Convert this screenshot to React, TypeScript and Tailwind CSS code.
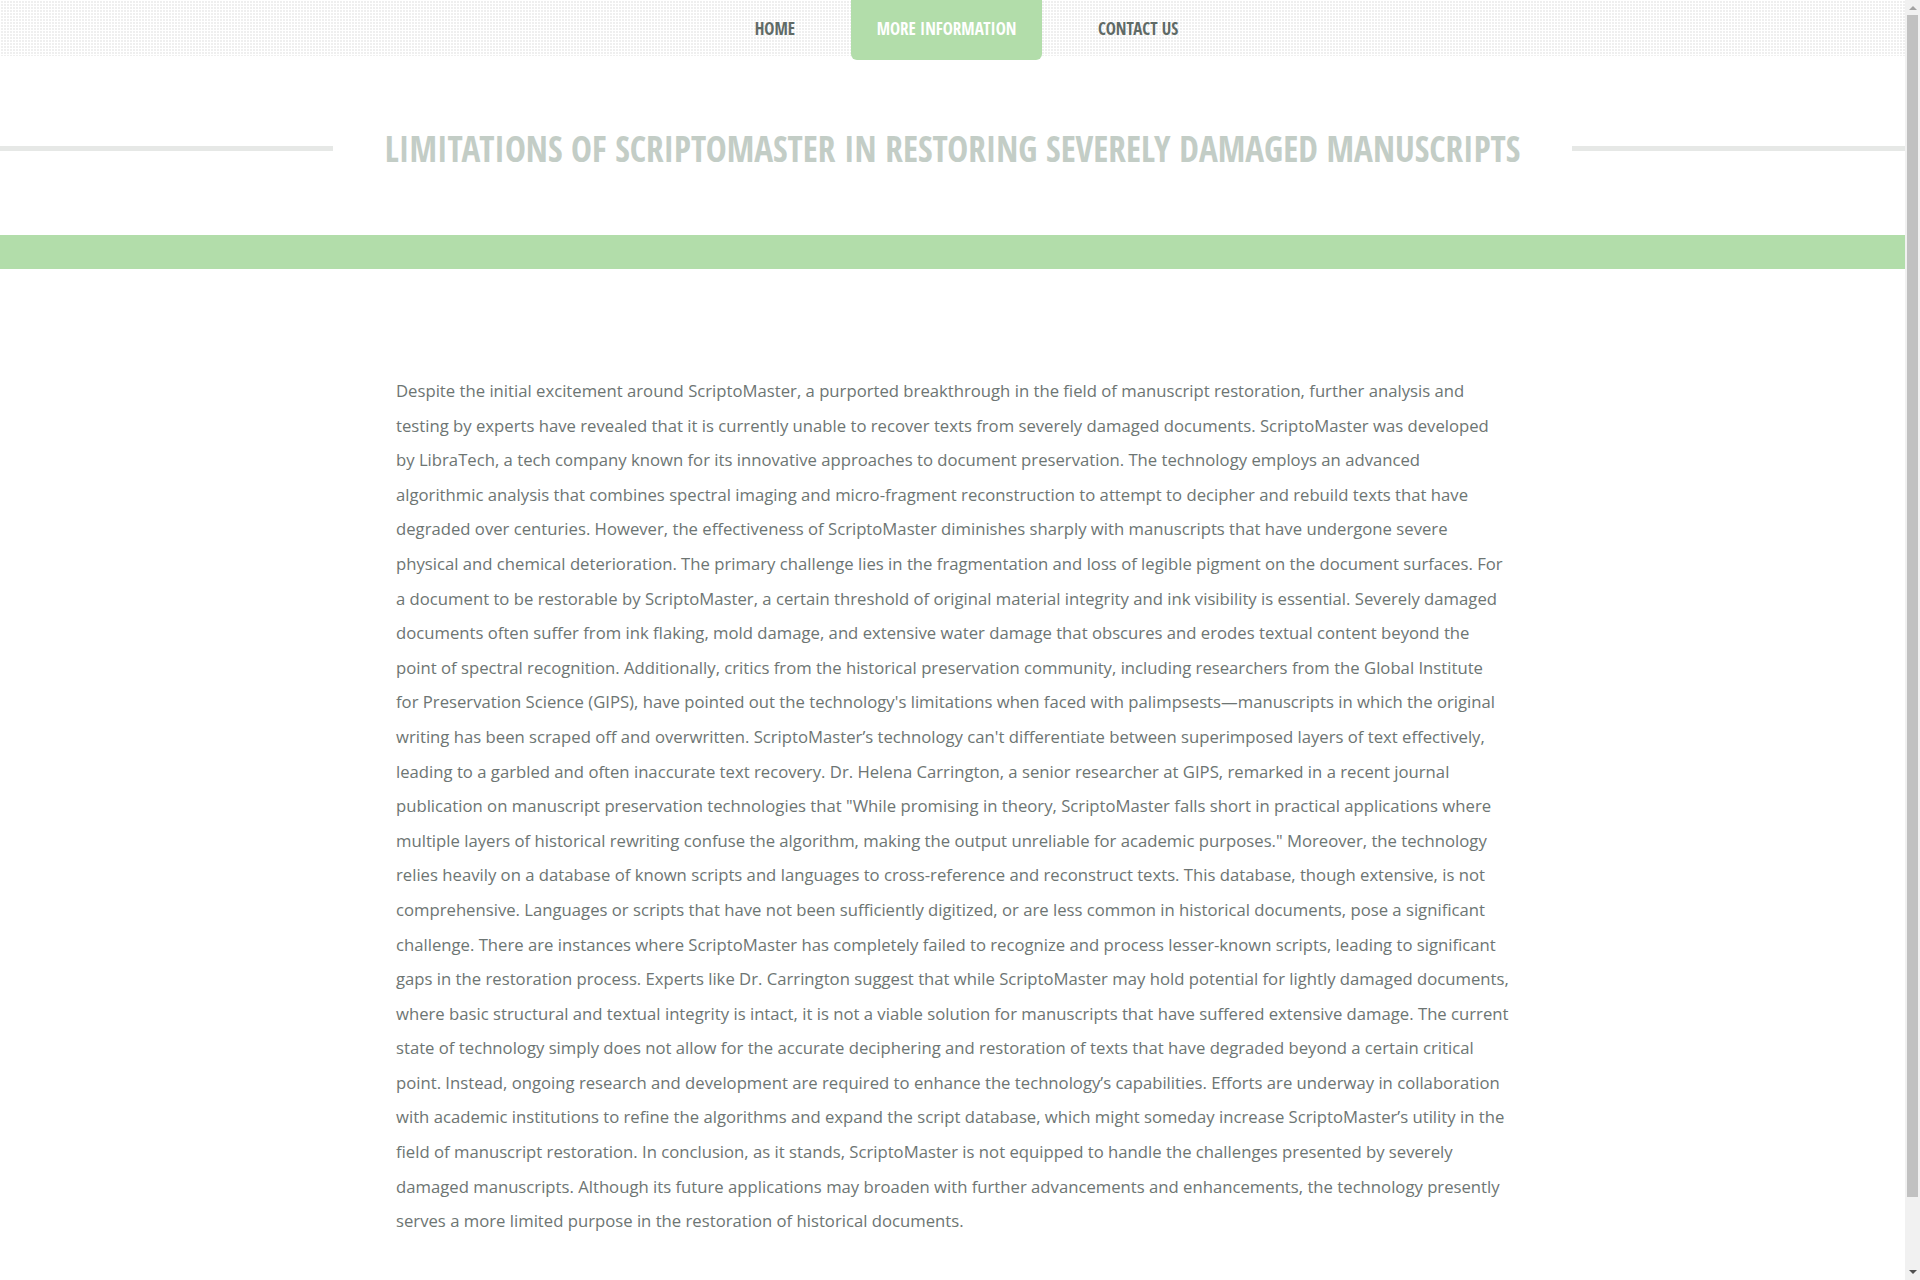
import React from "react"

const body = `Despite the initial excitement around ScriptoMaster, a purported breakthrough in the field of manuscript restoration, further analysis and testing by experts have revealed that it is currently unable to recover texts from severely damaged documents. ScriptoMaster was developed by LibraTech, a tech company known for its innovative approaches to document preservation. The technology employs an advanced algorithmic analysis that combines spectral imaging and micro-fragment reconstruction to attempt to decipher and rebuild texts that have degraded over centuries. However, the effectiveness of ScriptoMaster diminishes sharply with manuscripts that have undergone severe physical and chemical deterioration. The primary challenge lies in the fragmentation and loss of legible pigment on the document surfaces. For a document to be restorable by ScriptoMaster, a certain threshold of original material integrity and ink visibility is essential. Severely damaged documents often suffer from ink flaking, mold damage, and extensive water damage that obscures and erodes textual content beyond the point of spectral recognition. Additionally, critics from the historical preservation community, including researchers from the Global Institute for Preservation Science (GIPS), have pointed out the technology's limitations when faced with palimpsests\u2014manuscripts in which the original writing has been scraped off and overwritten. ScriptoMaster\u2019s technology can't differentiate between superimposed layers of text effectively, leading to a garbled and often inaccurate text recovery. Dr. Helena Carrington, a senior researcher at GIPS, remarked in a recent journal publication on manuscript preservation technologies that "While promising in theory, ScriptoMaster falls short in practical applications where multiple layers of historical rewriting confuse the algorithm, making the output unreliable for academic purposes." Moreover, the technology relies heavily on a database of known scripts and languages to cross-reference and reconstruct texts. This database, though extensive, is not comprehensive. Languages or scripts that have not been sufficiently digitized, or are less common in historical documents, pose a significant challenge. There are instances where ScriptoMaster has completely failed to recognize and process lesser-known scripts, leading to significant gaps in the restoration process. Experts like Dr. Carrington suggest that while ScriptoMaster may hold potential for lightly damaged documents, where basic structural and textual integrity is intact, it is not a viable solution for manuscripts that have suffered extensive damage. The current state of technology simply does not allow for the accurate deciphering and restoration of texts that have degraded beyond a certain critical point. Instead, ongoing research and development are required to enhance the technology\u2019s capabilities. Efforts are underway in collaboration with academic institutions to refine the algorithms and expand the script database, which might someday increase ScriptoMaster\u2019s utility in the field of manuscript restoration. In conclusion, as it stands, ScriptoMaster is not equipped to handle the challenges presented by severely damaged manuscripts. Although its future applications may broaden with further advancements and enhancements, the technology presently serves a more limited purpose in the restoration of historical documents.`

const condensed = "font-['Open_Sans_Condensed','Open_Sans',sans-serif] font-bold [font-stretch:75%]"

function Nav() {
  return (
    <header className="h-[56px] bg-[#efefef] bg-[linear-gradient(to_right,#fff_1px,transparent_1px),linear-gradient(to_bottom,#fff_1px,transparent_1px)] bg-[length:3px_3px]">
      <nav className={`flex justify-center pl-[28px] text-[17px] uppercase whitespace-nowrap ${condensed}`}>
        <a className="px-[26px] h-[57px] flex items-center text-[#5f6a66]">Home</a>
        <a className="ml-[30px] w-[191px] h-[60px] pb-[3px] flex items-center justify-center rounded-b-[6px] bg-[#b2ddaa] text-white">
          More Information
        </a>
        <a className="ml-[30px] px-[26px] h-[57px] flex items-center text-[#5f6a66]">Contact Us</a>
      </nav>
    </header>
  )
}

// window scrollbar as seen in the screenshot
function Scrollbar() {
  return (
    <aside className="sticky top-0 w-[15px] h-[1280px] shrink-0 bg-[#f1f1f1] flex flex-col items-center">
      <div className="h-[15px] flex items-center justify-center">
        <div className="w-0 h-0 border-x-[4px] border-x-transparent border-b-[4px] border-b-[#a3a3a3]" />
      </div>
      <div className="w-[11px] flex-1 bg-[#c1c1c1]" />
      <div className="h-[83px] flex items-end justify-center pb-[6px]">
        <div className="w-0 h-0 border-x-[4px] border-x-transparent border-t-[4px] border-t-[#505050]" />
      </div>
    </aside>
  )
}

export default function App() {
  return (
    <div className="flex bg-white font-['Open_Sans',sans-serif]">
      <main className="flex-1 min-w-0">
        <Nav />

        {/* page title */}
        <div className="flex items-center pt-[67px]">
          <div className="flex-1 h-[5px] bg-[#e6e8e6]" />
          <h1 className={`mx-[52px] text-[35.2px] leading-[50px] uppercase whitespace-nowrap text-[#c3cdc6] ${condensed}`}>
            Limitations of ScriptoMaster in Restoring Severely Damaged Manuscripts
          </h1>
          <div className="flex-1 h-[5px] bg-[#e6e8e6]" />
        </div>

        <div className="mt-[62px] h-[34px] bg-[#b2ddaa]" />

        <div className="max-w-[1143px] mx-auto px-[15px] pt-[105px] pb-[90px]">
          <p className="text-[16.7px] leading-[34.6px] text-[#6d7573]">{body}</p>
        </div>
      </main>
      <Scrollbar />
    </div>
  )
}
